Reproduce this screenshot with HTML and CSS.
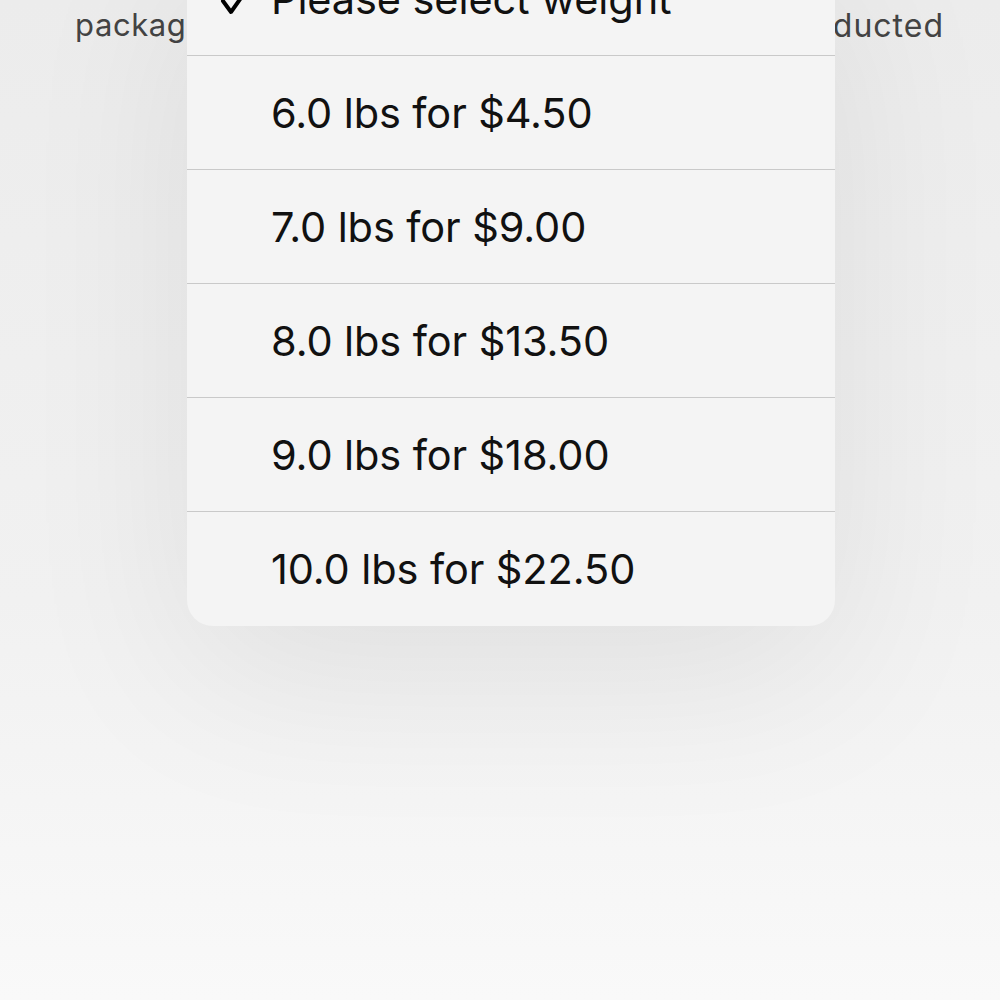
FILE: index.html
```html
<!DOCTYPE html>
<html lang="en">
<head>
    <meta charset="UTF-8">
    <meta name="viewport" content="width=device-width, initial-scale=1.0">
    <title>Select weight</title>
    <link rel="stylesheet" href="styles.css">
</head>
<body>
    <div class="page">
        <div class="behind">
            <span>package</span>
            <span class="right">deducted</span>
        </div>

        <ul class="menu">
            <li class="option selected">
                <svg class="check" viewBox="0 0 26 22" width="26" height="22">
                    <path d="M3 7 L11 18 L23 1" fill="none" stroke="#000" stroke-width="4" stroke-linecap="round" stroke-linejoin="round"/>
                </svg>
                Please select weight
            </li>
            <li class="option">6.0 lbs for $4.50</li>
            <li class="option">7.0 lbs for $9.00</li>
            <li class="option">8.0 lbs for $13.50</li>
            <li class="option">9.0 lbs for $18.00</li>
            <li class="option">10.0 lbs for $22.50</li>
        </ul>
    </div>
</body>
</html>
```

FILE: styles.css
```css
body {
    margin: 0;
    font-family: Inter, "Noto Sans", sans-serif;
    background-color: #f8f8f8;
}
.page {
    position: relative;
    width: 1000px;
    height: 1000px;
    overflow: hidden;
    background: linear-gradient(#ececec, #f1f1f1 60%, #f9f9f9);
}
.behind {
    display: flex;
    justify-content: space-between;
    padding: 6px 56px 0 75px;
    font-size: 31px;
    color: #444;
    white-space: nowrap;
    letter-spacing: 0.6px;
}
.behind .right {
    font-size: 32px;
    letter-spacing: 1px;
}
.menu {
    position: absolute;
    top: -58px;
    left: 187px;
    width: 648px;
    margin: 0;
    padding: 0;
    list-style: none;
    background-color: #f4f4f4;
    border-radius: 0 0 26px 26px;
    box-shadow: 0 50px 180px rgba(0, 0, 0, 0.075);
}
.option {
    position: relative;
    height: 113px;
    display: flex;
    align-items: center;
    padding-left: 84px;
    font-size: 41.5px;
    letter-spacing: -0.1px;
    color: #111;
    border-bottom: 1px solid #c9c9c9;
}
.option:last-child {
    border-bottom: none;
    height: 114px;
}
.check {
    position: absolute;
    left: 33px;
    top: 52px;
}
```
